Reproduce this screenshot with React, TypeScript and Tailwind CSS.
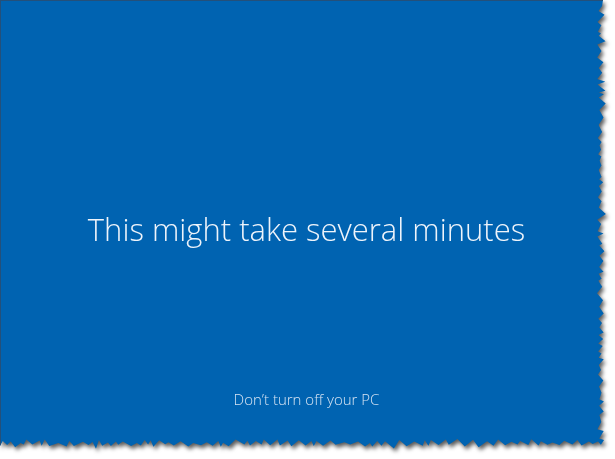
import React from "react";

function tornClip(): string {
  let s = 98765;
  const r = () => {
    s = (s * 16807) % 2147483647;
    return (s - 1) / 2147483646;
  };
  const pts: string[] = ["0px 0px", "603px 0px"];
  let y = 0;
  let out = true;
  while (y < 436) {
    y += 1.5 + r() * 6;
    const big = r() < 0.25;
    const x = out ? 601 + r() * (big ? 5 : 3) : 597 + r() * 3;
    out = !out;
    pts.push(`${x.toFixed(1)}px ${y.toFixed(1)}px`);
  }
  pts.push("604px 440px");
  let x = 604;
  out = true;
  while (x > 2) {
    x -= 2 + r() * 7;
    const big = r() < 0.25;
    const yy = out ? 444 + r() * (big ? 5 : 3) : 439 + r() * 4;
    out = !out;
    pts.push(`${Math.max(x, 0).toFixed(1)}px ${yy.toFixed(1)}px`);
  }
  pts.push("0px 446px");
  return `polygon(${pts.join(",")})`;
}

const clip = tornClip();

export default function App() {
  return (
    <div className="w-[615px] h-[459px] bg-white overflow-hidden font-['Open_Sans',sans-serif]">
      <div className="w-[612px] h-[452px] drop-shadow-[2px_3px_2px_rgba(0,0,0,0.65)]">
        <div
          className="w-[612px] h-[452px] bg-[#0063b1] border-t border-l border-[#24507a] flex flex-col items-center"
          style={{ clipPath: clip }}
        >
          <div className="mt-[208px] text-[31px] leading-[40px] font-light text-[#eef4fb] whitespace-nowrap">
            This might take several minutes
          </div>
          <div className="mt-[140px] text-[15px] leading-[20px] font-light text-[#d6e4f3] whitespace-nowrap">
            Don’t turn off your PC
          </div>
        </div>
      </div>
    </div>
  );
}
